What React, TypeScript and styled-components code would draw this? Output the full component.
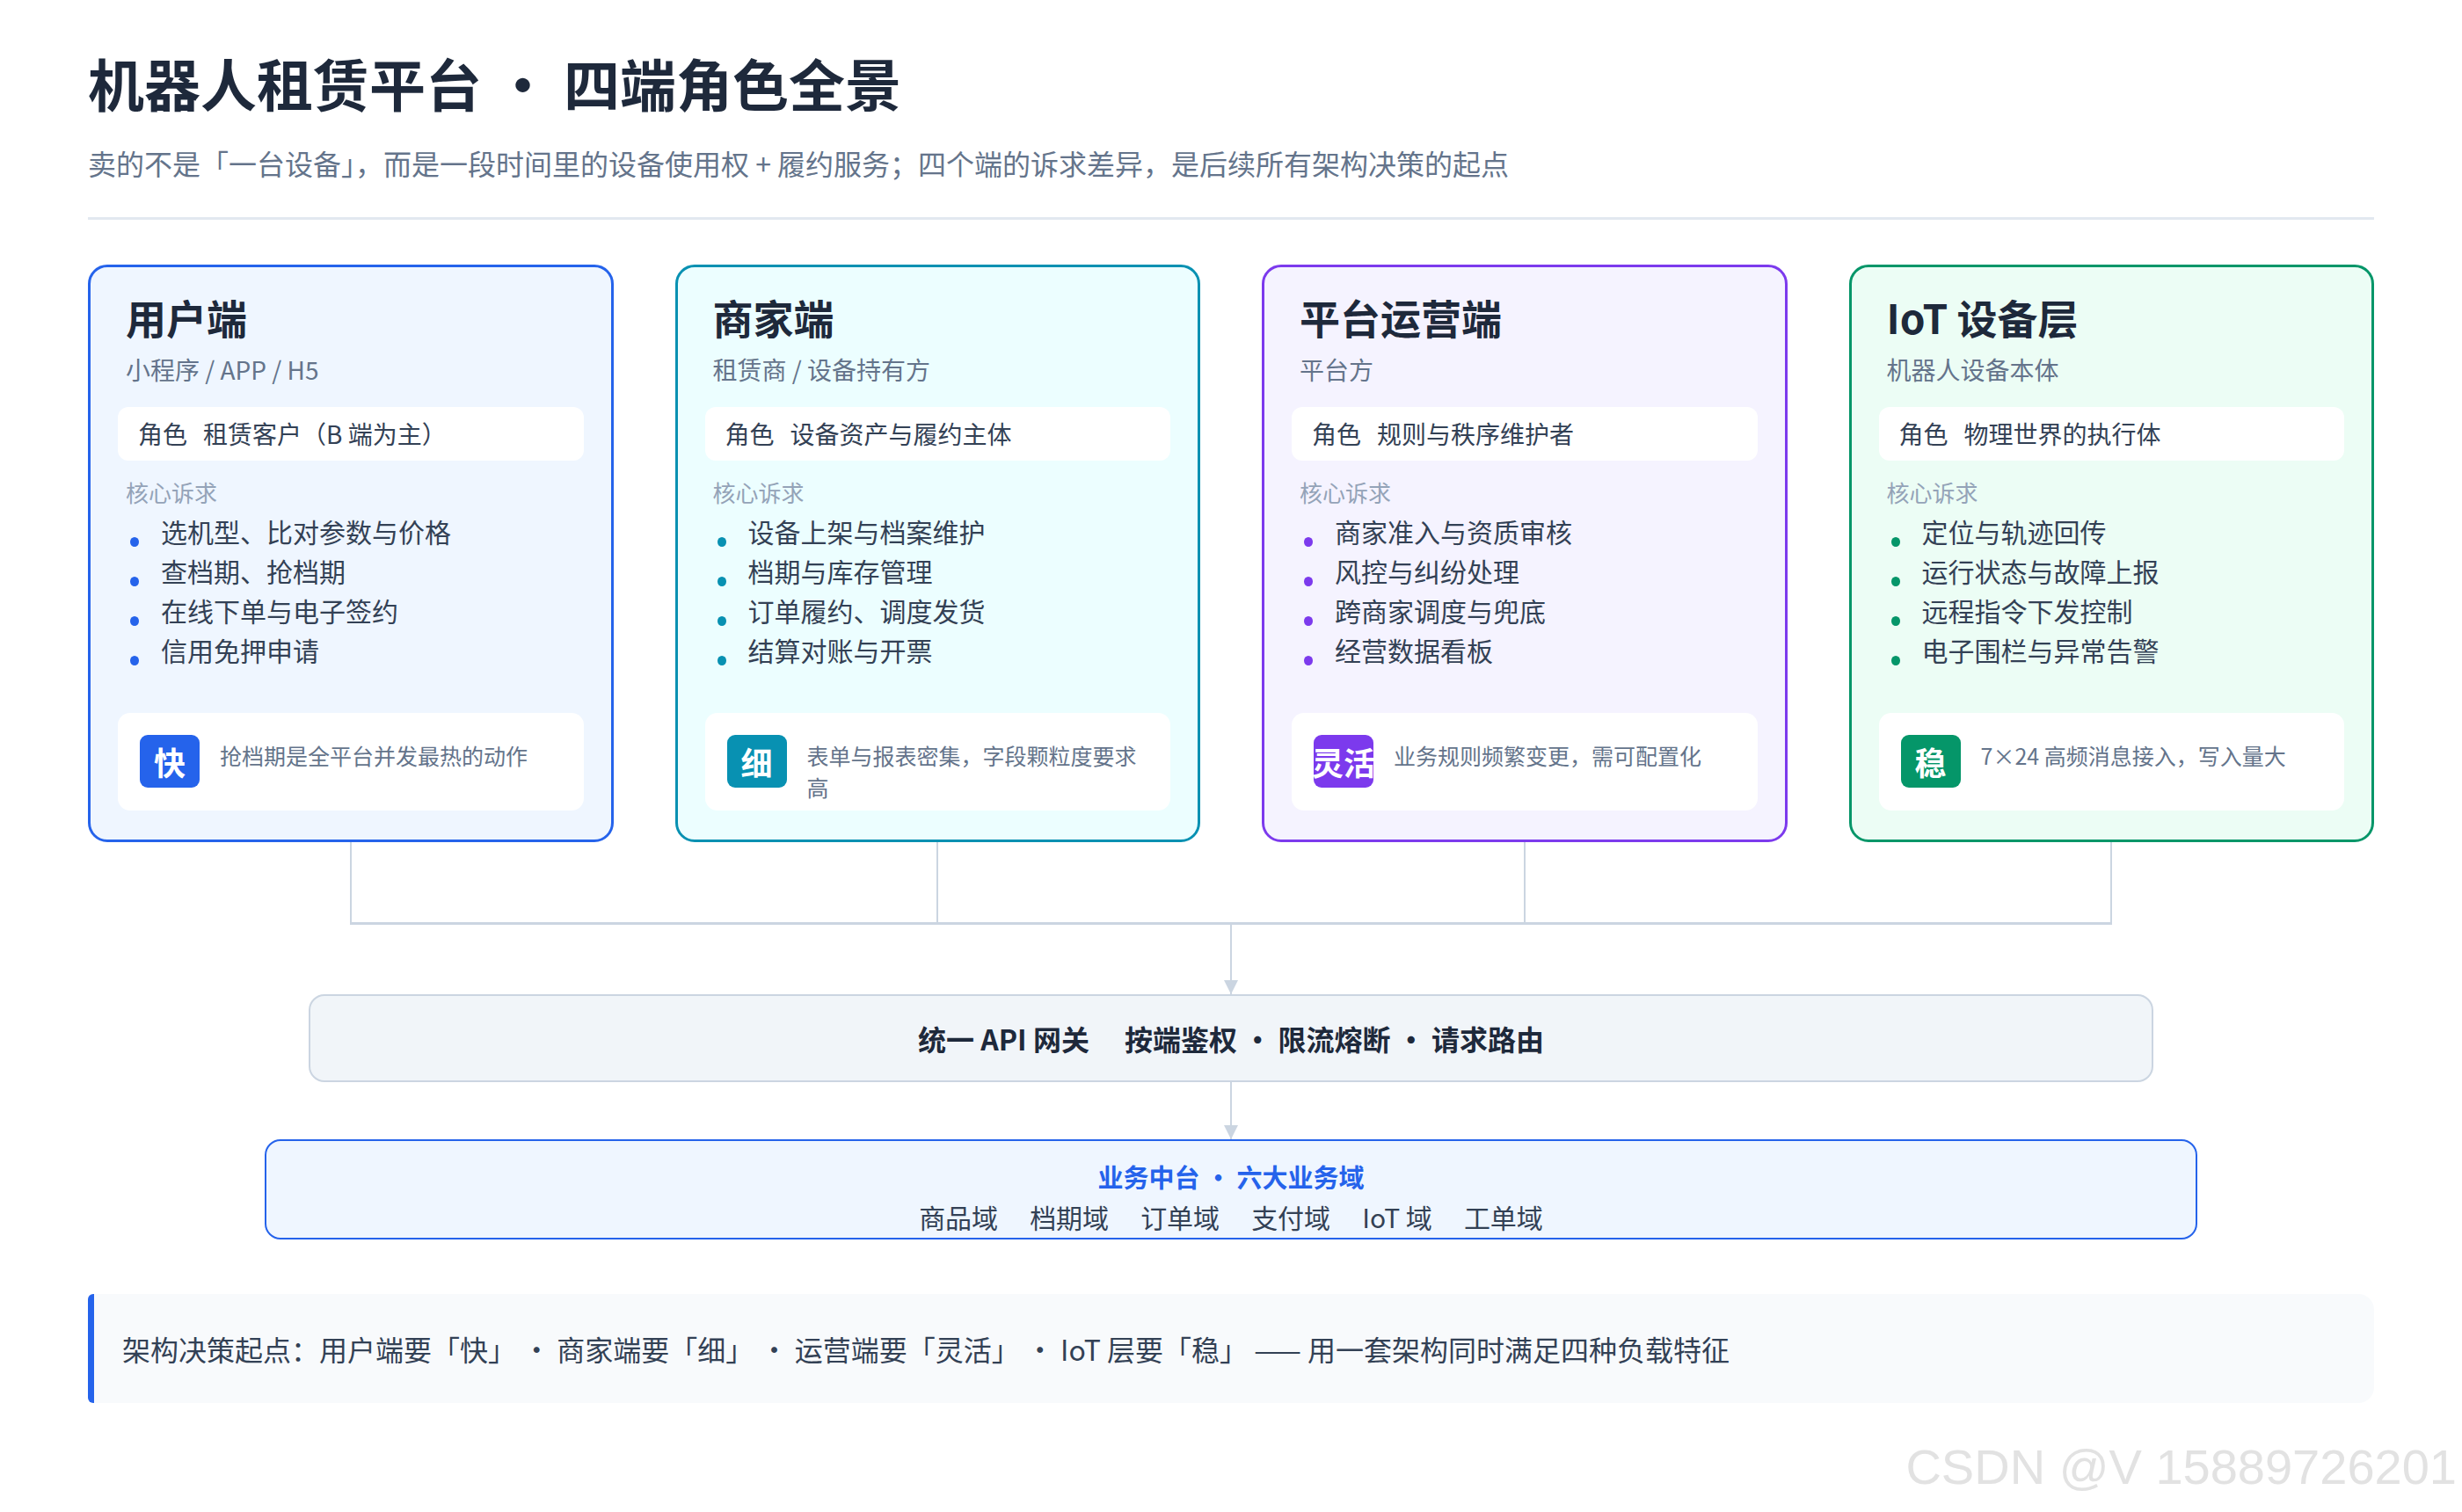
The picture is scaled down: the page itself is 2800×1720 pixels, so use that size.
import styled, { createGlobalStyle } from 'styled-components';

const GlobalStyle = createGlobalStyle`
  * { box-sizing: border-box; }
  body {
    margin: 0;
    background: #ffffff;
    font-family: "Noto Sans CJK SC", "Noto Sans", sans-serif;
    color: #1e293b;
  }
`;

type Tone = { border: string; bg: string };

const TONES: Record<string, Tone> = {
  blue: { border: '#2563eb', bg: '#eff6ff' },
  cyan: { border: '#0891b2', bg: '#ecfeff' },
  purple: { border: '#7c3aed', bg: '#f5f3ff' },
  green: { border: '#059669', bg: '#ecfdf5' },
};

const ROLES = [
  {
    tone: 'blue',
    title: '用户端',
    sub: '小程序 / APP / H5',
    role: '租赁客户（B 端为主）',
    needs: ['选机型、比对参数与价格', '查档期、抢档期', '在线下单与电子签约', '信用免押申请'],
    badge: '快',
    tip: '抢档期是全平台并发最热的动作',
  },
  {
    tone: 'cyan',
    title: '商家端',
    sub: '租赁商 / 设备持有方',
    role: '设备资产与履约主体',
    needs: ['设备上架与档案维护', '档期与库存管理', '订单履约、调度发货', '结算对账与开票'],
    badge: '细',
    tip: '表单与报表密集，字段颗粒度要求高',
  },
  {
    tone: 'purple',
    title: '平台运营端',
    sub: '平台方',
    role: '规则与秩序维护者',
    needs: ['商家准入与资质审核', '风控与纠纷处理', '跨商家调度与兜底', '经营数据看板'],
    badge: '灵活',
    tip: '业务规则频繁变更，需可配置化',
  },
  {
    tone: 'green',
    title: 'IoT 设备层',
    sub: '机器人设备本体',
    role: '物理世界的执行体',
    needs: ['定位与轨迹回传', '运行状态与故障上报', '远程指令下发控制', '电子围栏与异常告警'],
    badge: '稳',
    tip: '7×24 高频消息接入，写入量大',
  },
];

const DOMAINS = ['商品域', '档期域', '订单域', '支付域', 'IoT 域', '工单域'];

export default function App() {
  return (
    <>
      <GlobalStyle />
      <Page>
        <Title>机器人租赁平台 · 四端角色全景</Title>
        <Lead>卖的不是「一台设备」，而是一段时间里的设备使用权 + 履约服务；四个端的诉求差异，是后续所有架构决策的起点</Lead>
        <Divider />

        <CardRow>
          {ROLES.map((r) => (
            <Card key={r.title} tone={TONES[r.tone]}>
              <CardTitle>{r.title}</CardTitle>
              <CardSub>{r.sub}</CardSub>
              <RoleBox>
                <span>角色</span>
                <span>{r.role}</span>
              </RoleBox>
              <NeedLabel>核心诉求</NeedLabel>
              <NeedList>
                {r.needs.map((n) => (
                  <NeedItem key={n} dot={TONES[r.tone].border}>
                    {n}
                  </NeedItem>
                ))}
              </NeedList>
              <TipBox>
                <Badge color={TONES[r.tone].border}>{r.badge}</Badge>
                <TipText>{r.tip}</TipText>
              </TipBox>
            </Card>
          ))}
        </CardRow>

        <Drops>
          {ROLES.map((r) => (
            <Drop key={r.title} />
          ))}
        </Drops>
        <Joiner />
        <Arrow length={79} />

        <Gateway>
          <span>统一 API 网关</span>
          <span>按端鉴权 · 限流熔断 · 请求路由</span>
        </Gateway>

        <Arrow length={65} />

        <Business>
          <BusinessTitle>业务中台 · 六大业务域</BusinessTitle>
          <DomainRow>
            {DOMAINS.map((d) => (
              <span key={d}>{d}</span>
            ))}
          </DomainRow>
        </Business>

        <Note>
          架构决策起点：用户端要「快」 · 商家端要「细」 · 运营端要「灵活」 · IoT 层要「稳」 —— 用一套架构同时满足四种负载特征
        </Note>
      </Page>
      <Watermark>CSDN @V 15889726201</Watermark>
    </>
  );
}

const Page = styled.div`
  width: 2800px;
  height: 1720px;
  padding: 52px 100px 0;
  display: flex;
  flex-direction: column;
`;

const Title = styled.h1`
  margin: 0;
  font-size: 64px;
  line-height: 1.3;
  font-weight: 700;
  color: #1e293b;
`;

const Lead = styled.p`
  margin: 28px 0 0;
  font-size: 32px;
  line-height: 1.4;
  color: #64748b;
`;

const Divider = styled.div`
  margin-top: 39px;
  height: 3px;
  background: #e2e8f0;
`;

const CardRow = styled.div`
  margin-top: 51px;
  display: grid;
  grid-template-columns: repeat(4, 1fr);
  gap: 70px;
`;

const Card = styled.div<{ tone: Tone }>`
  height: 657px;
  border: 3px solid ${(p) => p.tone.border};
  background: ${(p) => p.tone.bg};
  border-radius: 22px;
  padding: 27px 31px 33px;
  display: flex;
  flex-direction: column;
`;

const CardTitle = styled.div`
  padding-left: 9px;
  font-size: 46px;
  line-height: 1.3;
  font-weight: 700;
  color: #1e293b;
`;

const CardSub = styled.div`
  margin-top: 10px;
  padding-left: 9px;
  font-size: 28px;
  line-height: 1.4;
  color: #64748b;
`;

const RoleBox = styled.div`
  margin-top: 23px;
  height: 61px;
  border-radius: 12px;
  background: #ffffff;
  padding: 0 23px;
  display: flex;
  align-items: center;
  gap: 18px;
  font-size: 28px;
  color: #334155;
`;

const NeedLabel = styled.div`
  margin-top: 18px;
  padding-left: 9px;
  font-size: 26px;
  line-height: 1.4;
  color: #94a3b8;
`;

const NeedList = styled.ul`
  margin: 4px 0 0;
  padding: 0 0 0 14px;
  list-style: none;
`;

const NeedItem = styled.li<{ dot: string }>`
  position: relative;
  padding-left: 35px;
  font-size: 30px;
  line-height: 45px;
  color: #334155;

  &::before {
    content: '';
    position: absolute;
    left: 0;
    top: 29px;
    width: 10px;
    height: 11px;
    border-radius: 50%;
    background: ${(p) => p.dot};
  }
`;

const TipBox = styled.div`
  margin-top: auto;
  height: 111px;
  border-radius: 14px;
  background: #ffffff;
  padding: 0 25px;
  display: flex;
  align-items: center;
  gap: 23px;
`;

const Badge = styled.div<{ color: string }>`
  flex: none;
  width: 68px;
  height: 60px;
  border-radius: 9px;
  background: ${(p) => p.color};
  color: #ffffff;
  font-size: 36px;
  font-weight: 700;
  display: flex;
  align-items: center;
  justify-content: center;
  white-space: nowrap;
  overflow: visible;
`;

const TipText = styled.div`
  align-self: flex-start;
  margin-top: 30px;
  font-size: 25px;
  line-height: 1.45;
  color: #64748b;
`;

const Drops = styled.div`
  display: grid;
  grid-template-columns: repeat(4, 1fr);
  gap: 70px;
  height: 91px;
`;

const Drop = styled.div`
  display: flex;
  justify-content: center;

  &::before {
    content: '';
    width: 2px;
    height: 100%;
    background: #cbd5e1;
  }
`;

const Joiner = styled.div`
  margin: 0 298px;
  height: 3px;
  background: #cbd5e1;
`;

const Arrow = styled.div<{ length: number }>`
  align-self: center;
  position: relative;
  width: 2px;
  height: ${(p) => p.length}px;
  background: #cbd5e1;

  &::after {
    content: '';
    position: absolute;
    left: -7px;
    bottom: 0;
    border-left: 8px solid transparent;
    border-right: 8px solid transparent;
    border-top: 16px solid #cbd5e1;
  }
`;

const Gateway = styled.div`
  align-self: center;
  width: 2098px;
  height: 100px;
  border: 2px solid #cbd5e1;
  border-radius: 18px;
  background: #f1f5f9;
  display: flex;
  align-items: center;
  justify-content: center;
  gap: 40px;
  font-size: 32px;
  font-weight: 700;
  color: #1e293b;
`;

const Business = styled.div`
  align-self: center;
  width: 2198px;
  height: 114px;
  border: 2px solid #2563eb;
  border-radius: 18px;
  background: #eff6ff;
  padding-top: 20px;
  display: flex;
  flex-direction: column;
  align-items: center;
  gap: 6px;
`;

const BusinessTitle = styled.div`
  font-size: 29px;
  line-height: 1.4;
  font-weight: 700;
  color: #2563eb;
`;

const DomainRow = styled.div`
  display: flex;
  gap: 36px;
  font-size: 30px;
  line-height: 1.3;
  color: #334155;
`;

const Note = styled.div`
  margin-top: 62px;
  height: 124px;
  border-left: 7px solid #2563eb;
  border-radius: 6px 18px 18px 6px;
  background: #f8fafc;
  padding-left: 32px;
  display: flex;
  align-items: center;
  font-size: 32px;
  color: #334155;
`;

const Watermark = styled.div`
  position: absolute;
  right: 6px;
  top: 1636px;
  font-family: "Liberation Sans", sans-serif;
  font-size: 56px;
  color: #e2e2e2;
  white-space: nowrap;
`;
